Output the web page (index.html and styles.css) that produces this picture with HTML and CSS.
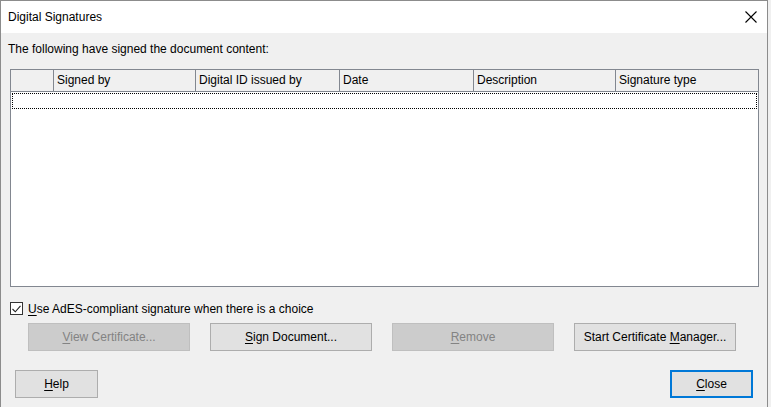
FILE: index.html
```html
<!DOCTYPE html>
<html>
<head>
<meta charset="utf-8">
<link rel="stylesheet" href="styles.css">
</head>
<body>
<div class="window">
  <div class="titlebar">
    <span class="title">Digital Signatures</span>
    <svg class="close-x" width="12" height="12" viewBox="0 0 12 12"><path d="M0.5 0.5 L11.5 11.5 M11.5 0.5 L0.5 11.5" stroke="#000" stroke-width="1.1" fill="none"/></svg>
  </div>
  <div class="content">
    <div class="label">The following have signed the document content:</div>
    <div class="table">
      <div class="thead">
        <div class="th c0"></div>
        <div class="th c1">Signed by</div>
        <div class="th c2">Digital ID issued by</div>
        <div class="th c3">Date</div>
        <div class="th c4">Description</div>
        <div class="th c5">Signature type</div>
      </div>
      <div class="tbody">
        <div class="focus-row"></div>
      </div>
    </div>
    <label class="check">
      <span class="box"><svg width="9" height="8" viewBox="0 0 9 8"><path d="M0.5 4 L3.3 6.8 L8.5 0.8" stroke="#222" stroke-width="1.1" fill="none"/></svg></span>
      <span><u>U</u>se AdES-compliant signature when there is a choice</span>
    </label>
    <div class="actions">
      <button class="btn disabled"><u>V</u>iew Certificate...</button>
      <button class="btn"><u>S</u>ign Document...</button>
      <button class="btn disabled"><u>R</u>emove</button>
      <button class="btn">Start Certificate <u>M</u>anager...</button>
    </div>
    <div class="footer">
      <button class="btn small"><u>H</u>elp</button>
      <button class="btn small default"><u>C</u>lose</button>
    </div>
  </div>
</div>
</body>
</html>
```
FILE: styles.css
```css
html, body {
  margin: 0;
  padding: 0;
  background: #f0f0f0;
}
body {
  font-family: "Liberation Sans", Arial, sans-serif;
  font-size: 12px;
  color: #000;
}
.window {
  width: 768px;
  height: 407px;
  box-sizing: border-box;
  border: 1px solid #8c8c8c;
  border-bottom: none;
  display: flex;
  flex-direction: column;
  background: #f0f0f0;
}
.titlebar {
  height: 32px;
  background: #fff;
  display: flex;
  align-items: center;
  justify-content: space-between;
  padding: 0 10px 0 7px;
  flex: none;
}
.title {
  font-size: 12px;
}
.content {
  flex: 1;
  padding: 8px 8px 0 7px;
  display: flex;
  flex-direction: column;
}
.label {
  height: 15px;
  line-height: 15px;
  margin-top: 1px;
}
.table {
  margin: 12px 0 0 2px;
  width: 749px;
  height: 218px;
  box-sizing: border-box;
  border: 1px solid #828790;
  background: #fff;
  display: flex;
  flex-direction: column;
}
.thead {
  display: flex;
  height: 21px;
  background: #f0f0f0;
  border-bottom: 1px solid #828790;
  flex: none;
}
.th {
  box-sizing: border-box;
  height: 21px;
  line-height: 21px;
  padding-left: 3px;
  border-right: 1px solid #828790;
  white-space: nowrap;
}
.c0 { width: 43px; }
.c1 { width: 142px; }
.c2 { width: 144px; }
.c3 { width: 134px; }
.c4 { width: 142px; }
.c5 { flex: 1; border-right: none; }
.tbody {
  flex: 1;
  padding: 1px 1px 0 1px;
}
.focus-row {
  height: 16px;
  box-sizing: border-box;
  border: 1px dotted #000;
}
.check {
  display: flex;
  align-items: center;
  margin: 15px 0 0 2px;
  height: 13px;
  gap: 5px;
}
.box {
  width: 13px;
  height: 13px;
  box-sizing: border-box;
  border: 1px solid #333;
  background: #fff;
  display: flex;
  align-items: center;
  justify-content: center;
}
.actions {
  display: flex;
  gap: 20px;
  margin: 8px 0 0 20px;
}
.btn {
  font-family: inherit;
  font-size: 12px;
  width: 162px;
  height: 28px;
  box-sizing: border-box;
  background: #e1e1e1;
  border: 1px solid #adadad;
  color: #000;
  padding: 0;
  margin: 0;
}
.btn.disabled {
  background: #cccccc;
  border-color: #bfbfbf;
  color: #838383;
}
.footer {
  display: flex;
  justify-content: space-between;
  margin: 19px 6px 0 7px;
}
.btn.small {
  width: 83px;
}
.btn.default {
  border: 2px solid #0078d7;
}
u {
  text-decoration: underline;
  text-underline-offset: 2px;
}
```
